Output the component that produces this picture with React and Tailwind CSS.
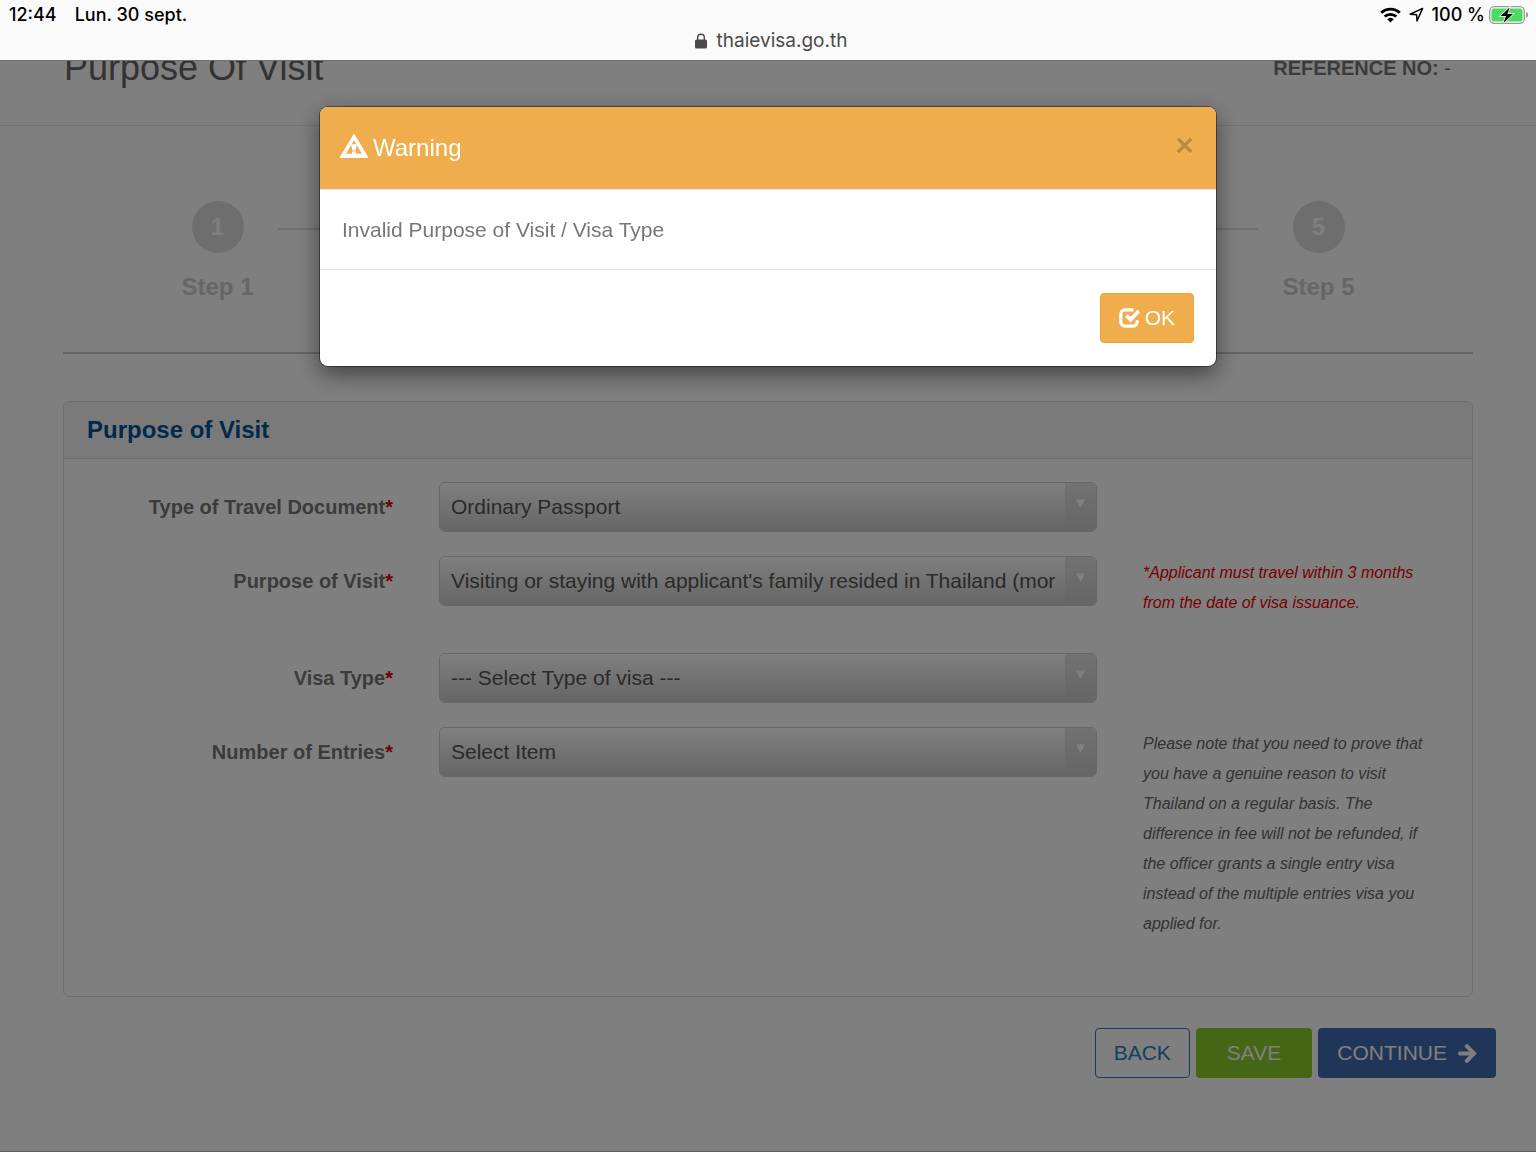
import React from "react";

const FIELDS = [
  {
    id: "travel-document",
    label: "Type of Travel Document",
    value: "Ordinary Passport",
  },
  {
    id: "purpose",
    label: "Purpose of Visit",
    value: "Visiting or staying with applicant's family resided in Thailand (mor",
    help: "*Applicant must travel within 3 months from the date of visa issuance.",
    helpClass: "text-[#f00000]",
    rowClass: "min-h-[73px]",
  },
  {
    id: "visa-type",
    label: "Visa Type",
    value: "--- Select Type of visa ---",
  },
  {
    id: "entries",
    label: "Number of Entries",
    value: "Select Item",
    help: "Please note that you need to prove that you have a genuine reason to visit Thailand on a regular basis. The difference in fee will not be refunded, if the officer grants a single entry visa instead of the multiple entries visa you applied for.",
    helpClass: "text-[#666666]",
  },
];

const WifiIcon = () => (
  <svg className="h-4 w-[21px]" viewBox="0 0 21 16" fill="none" stroke="#000" strokeWidth="2.8">
    <path d="M1.2 5.8a13.4 13.4 0 0 1 18.6 0" />
    <path d="M4.7 9.6a8.4 8.4 0 0 1 11.6 0" />
    <path d="M10.5 15.6 7.2 12.2a4.8 4.8 0 0 1 6.6 0Z" fill="#000" stroke="none" />
  </svg>
);

const LocationIcon = () => (
  <svg className="h-[15px] w-[15px]" viewBox="0 0 15 15" fill="none" stroke="#000" strokeWidth="1.5" strokeLinejoin="round">
    <path d="M13.6 1.4 1.2 7.2l6.4.6.4 6.2Z" />
  </svg>
);

const BatteryIcon = () => (
  <svg className="h-[18px] w-10" viewBox="0 0 40 18">
    <rect x="0.7" y="0.7" width="34.6" height="16.6" rx="4.5" fill="none" stroke="#999" strokeWidth="1.3" />
    <rect x="2.5" y="2.5" width="31" height="13" rx="2.5" fill="#4cd964" />
    <path d="M37 6v6c1.2-.4 2-1.6 2-3s-.8-2.6-2-3Z" fill="#999" />
    <path d="M20.5 1.500 11.5 10H17l-2.500 7L24 8h-5.500Z" fill="#000" stroke="#fafafa" strokeWidth="1.6" paintOrder="stroke" />
  </svg>
);

const LockIcon = () => (
  <svg className="h-4 w-3" viewBox="0 0 12 16">
    <rect x="0" y="6.5" width="12" height="9" rx="1.5" fill="#4a4a4a" />
    <path d="M2.700 7V4.600a3.300 3.300 0 0 1 6.600 0V7" fill="none" stroke="#4a4a4a" strokeWidth="1.4" />
  </svg>
);

const WarningIcon = () => (
  <svg className="-mt-1 h-[26px] w-7" viewBox="0 0 28 26" fill="#fff">
    <path fillRule="evenodd" d="M14 .5 28 23.800q.3 1.200-.7 1.200H.7q-1 0-.7-1.200ZM14 7.500 6 20.800h16Z" />
    <path d="M11 11.300h6L15.500 17.500h-3ZM12 18.500h4v2.600h-4Z" />
  </svg>
);

const CheckIcon = () => (
  <svg className="h-[21px] w-[21px]" viewBox="0 0 21 21" fill="none" stroke="#fff">
    <path d="M14.500 1.800H6A4.200 4.200 0 0 0 1.800 6v8A4.200 4.200 0 0 0 6 18.200h8a4.200 4.200 0 0 0 4.200-4.200v-1.800" strokeWidth="3.200" />
    <path d="m7.300 7.500 4.200 4.200 8.200-8.700" strokeWidth="3.800" />
  </svg>
);

const ArrowIcon = () => (
  <svg className="h-[19px] w-[19px]" viewBox="0 0 19 19" fill="none" stroke="#fff" strokeWidth="4">
    <path d="M2 9.5h13" strokeLinecap="round" />
    <path d="m8.800 2.200 7.200 7.300-7.200 7.300" strokeLinecap="round" />
  </svg>
);

const StatusBar = () => (
  <div className="fixed inset-x-0 top-0 z-30 h-[61px] border-b border-[#6e6e6e] bg-[#fafafa] font-['Inter',sans-serif]">
    <div className="flex h-7 items-center justify-between pt-px pr-[7px] pl-[9px] text-[18px] font-medium text-black">
      <div className="flex gap-[18px]">
        <span>12:44</span>
        <span>Lun. 30 sept.</span>
      </div>
      <div className="flex items-center gap-2">
        <WifiIcon />
        <LocationIcon />
        <span className="flex items-center gap-1">
          100 %
          <BatteryIcon />
        </span>
      </div>
    </div>
    <div className="flex h-[26px] items-center justify-center gap-[10px] pl-[6px] text-[19px] text-[#4a4a4a]">
      <LockIcon />
      <span>thaievisa.go.th</span>
    </div>
  </div>
);

const Step = ({ number }) => (
  <li className="flex w-[121px] flex-col items-center">
    <span className="flex h-[52px] w-[52px] items-center justify-center rounded-full bg-[#dcdcdc] text-[24px] font-bold text-white">
      {number}
    </span>
    <span className="mt-4 text-[24px] leading-9 font-bold text-[#cccccc]">Step {number}</span>
  </li>
);

const Field = ({ id, label, value, help, helpClass, rowClass = "" }) => (
  <div className={`mb-6 grid grid-cols-4 ${rowClass}`}>
    <label
      htmlFor={id}
      className="flex h-[50px] items-center justify-end px-[23px] text-[20px] font-bold text-[#777777]"
    >
      {label}
      <span className="text-[#e00000]">*</span>
    </label>
    <div className="col-span-2 px-[23px]">
      <div className="relative h-[50px] overflow-hidden rounded-md border border-[#cccccc]">
        <select
          id={id}
          className="h-full w-full appearance-none bg-linear-to-b from-white to-[#cccccc] pr-10 pl-[11px] text-[21px] text-[#555555]"
        >
          <option>{value}</option>
        </select>
        <span className="pointer-events-none absolute inset-y-0 right-0 flex w-[31px] justify-center bg-linear-to-b from-[#e4e4e4] to-[#cccccc] pt-4">
          <svg className="h-[11px] w-[11px]" viewBox="0 0 11 11" fill="#fff" stroke="#bbb" strokeWidth="0.5">
            <path d="M0 0h11L5.500 10Z" />
          </svg>
        </span>
      </div>
    </div>
    {help && (
      <p className={`pt-0.5 pr-9 pl-[23px] text-[16px] leading-[30px] italic ${helpClass}`}>{help}</p>
    )}
  </div>
);

const WarningModal = () => (
  <div className="fixed inset-0 z-20 bg-black/50 px-4 pt-[107px]">
    <div
      role="dialog"
      aria-labelledby="warning-title"
      className="mx-auto max-w-[896px] overflow-hidden rounded-lg bg-white shadow-[0_8px_23px_rgba(0,0,0,0.5)] ring-1 ring-black/40"
    >
      <div className="flex items-start justify-between border-b border-[#e5e5e5] bg-[#f0ad4e] py-[23px] pr-[22px] pl-5">
        <h4 id="warning-title" className="flex items-center gap-[5px] text-[24px] leading-9 text-white">
          <WarningIcon />
          Warning
        </h4>
        <button
          type="button"
          aria-label="Close"
          className="text-[32px] leading-[30px] font-bold text-[#c08a3e] [text-shadow:0_1px_0_#f3bd71]"
        >
          ×
        </button>
      </div>
      <div className="px-[22px] py-[23px] text-[21px] leading-[33px] text-[#777777]">
        Invalid Purpose of Visit / Visa Type
      </div>
      <div className="flex justify-end border-t border-[#e5e5e5] px-[22px] py-[23px]">
        <button
          type="button"
          className="flex h-[50px] items-center gap-[5px] rounded-[4px] border border-[#eea236] bg-[#f0ad4e] px-[18px] text-[21px] text-white"
        >
          <CheckIcon />
          OK
        </button>
      </div>
    </div>
  </div>
);

const App = () => {
  return (
    <div className="min-h-screen bg-white font-['Liberation_Sans',Arial,sans-serif]">
      <StatusBar />

      <header className="flex h-[126px] items-start justify-between border-b border-[#e7e7e7] pt-12 pr-[85px] pl-16">
        <h1 className="text-[36px] leading-10 text-[#666666]">Purpose Of Visit</h1>
        <p className="text-[20px] leading-10 text-[#777777]">
          <strong>REFERENCE NO:</strong> -
        </p>
      </header>

      <main className="px-[63px]">
        <ol className="flex border-b-2 border-[#cccccc] px-[94px] pt-[75px] pb-[47px]">
          <Step number={1} />
          <li aria-hidden="true" className="mt-[27px] h-[2px] flex-1 bg-[#e0e0e0]" />
          <Step number={5} />
        </ol>

        <section className="mt-[47px] rounded-md border border-[#dddddd]">
          <h2 className="rounded-t-md border-b border-[#dddddd] bg-[#f5f5f5] px-[23px] text-[24px] leading-[56px] font-bold text-[#005496]">
            Purpose of Visit
          </h2>
          <form className="pt-[23px] pb-[33px]">
            {FIELDS.map((field) => (
              <Field key={field.id} {...field} />
            ))}
          </form>
        </section>
      </main>

      <div className="flex justify-end gap-[6px] border-b border-[#bbbbbb] pt-[31px] pr-10 pb-[73px] text-[21px]">
        <button
          type="button"
          className="h-[50px] rounded-[4px] border border-[#3f6cb0] px-[18px] text-[#2a80b9]"
        >
          BACK
        </button>
        <button type="button" className="h-[50px] rounded-[4px] bg-[#88cc2a] px-[31px] text-white">
          SAVE
        </button>
        <button
          type="button"
          className="flex h-[50px] items-center gap-[11px] rounded-[4px] bg-[#406cb0] px-[19px] text-white"
        >
          CONTINUE
          <ArrowIcon />
        </button>
      </div>

      <WarningModal />
    </div>
  );
};

export default App;
